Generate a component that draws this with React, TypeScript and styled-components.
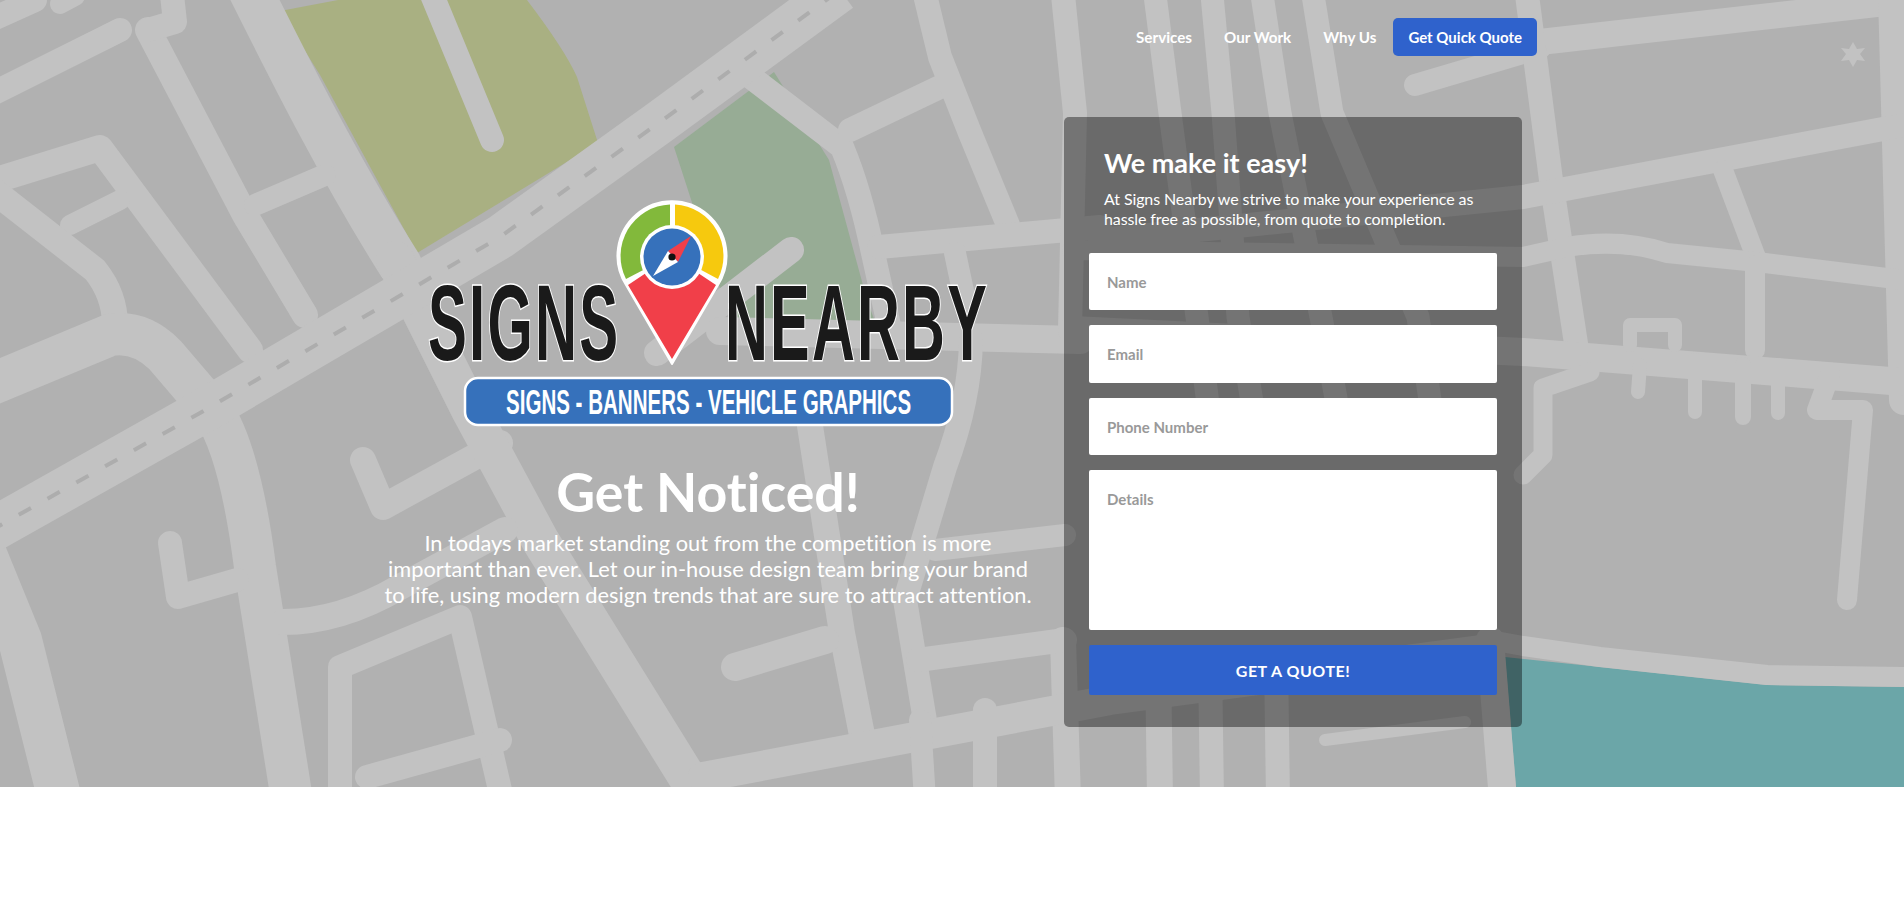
import React from "react";
import styled, { createGlobalStyle } from "styled-components";

const GlobalStyle = createGlobalStyle`
  * {
    box-sizing: border-box;
  }

  html,
  body {
    margin: 0;
    padding: 0;
    background-color: #fff;
    font-family: Lato, "Open Sans", sans-serif;
    font-variant-ligatures: none;
  }
`;

// [path, stroke width]
const roads: [string, number][] = [
  ["M-10 95 L120 30", 24],
  ["M-5 18 L35 0", 24],
  ["M60 4 L75 -4", 20],
  ["M148 30 L245 215 L305 315", 26],
  ["M148 30 L175 22 L172 -5", 24],
  ["M250 -10 C290 70 340 170 400 265", 44],
  ["M255 205 L325 175", 22],
  ["M-10 182 L100 148 L250 350", 26],
  ["M70 225 L120 200", 20],
  ["M-10 188 L95 270 Q115 295 115 325", 26],
  ["M-10 385 L110 335 Q140 330 165 355 L212 410 Q240 450 255 567 L292 800", 42],
  ["M-25 530 L20 640 L60 800", 44],
  ["M170 543 L178 597 L237 580", 24],
  ["M363 460 L383 507 L500 443", 26],
  ["M395 260 L470 410 L540 540 L695 790", 38],
  ["M283 622 Q340 622 400 587 L505 530", 26],
  ["M340 800 L340 667 L460 617 L500 790", 24],
  ["M367 777 L500 740", 24],
  ["M430 -10 L492 140", 24],
  ["M735 65 L842 147 Q860 190 873 253 L890 330", 24],
  ["M850 130 L940 87", 24],
  ["M925 -5 L940 57 L970 133 L1008 225", 24],
  ["M879 247 L1100 227", 24],
  ["M1063 -5 L1075 113 L1070 330", 24],
  ["M1155 -5 L1170 113 L1197 317 L1210 420", 23],
  ["M1212 -5 L1223 113 L1238 317 L1255 420", 23],
  ["M1262 -5 L1280 113 L1321 317 L1340 420", 23],
  ["M1313 -5 L1332 113 L1418 317 L1430 400", 23],
  ["M1063 640 L1068 800", 26],
  ["M1158 660 L1160 800", 26],
  ["M1210 660 L1212 800", 24],
  ["M1276 660 L1278 800", 24],
  ["M1325 740 L1465 722", 12],
  ["M955 253 L967 310", 22],
  ["M791 250 L657 353", 26],
  ["M720 331 L1080 340", 28],
  ["M971 340 Q970 400 945 467 L905 600 L927 733", 24],
  ["M806 400 L842 633 L862 735", 26],
  ["M735 667 L825 640", 28],
  ["M918 660 L1065 640", 24],
  ["M935 550 L1065 535", 22],
  ["M703 777 L1110 700 L1480 650", 30],
  ["M985 710 L985 800", 24],
  ["M920 720 L925 800", 22],
  ["M1415 85 L1540 48", 22],
  ["M1540 42 L1885 3", 26],
  ["M1527 -5 L1551 180 L1577 350", 24],
  ["M1893 -5 L1904 400", 30],
  ["M1100 240 L1523 197 L1904 125", 24],
  ["M1723 170 L1757 260", 20],
  ["M1072 250 L1523 257 L1567 247 Q1620 238 1667 253 L1757 262 L1904 280", 20],
  ["M1755 265 L1755 350", 20],
  ["M1072 330 L1523 352 L1904 382", 28],
  ["M1630 345 L1630 325 L1675 325 L1675 345", 14],
  ["M1640 365 L1638 392", 14],
  ["M1695 360 L1695 412", 14],
  ["M1743 365 L1743 417", 16],
  ["M1778 365 L1778 413", 14],
  ["M1590 372 L1543 388 L1543 455 L1523 475", 19],
  ["M1830 375 L1817 410 L1863 410 L1847 600", 20],
  ["M1490 640 L1523 646 L1600 657 L1767 675 L1904 677", 20],
  ["M1490 640 L1503 800", 28],
];

const MapArt = () => (
  <MapSvg viewBox="0 0 1904 787" preserveAspectRatio="none">
    <rect width="1904" height="787" fill="#b1b1b1" />
    <path d="M280 11 L338 0 L527 0 Q565 50 577 77 L598 143 L417 253 L320 75 Z" fill="#a9b082" />
    <path d="M674 147 L774 72 L829 160 L867 300 L880 335 L735 335 Z" fill="#97ac95" />
    <path d="M1505 657 L1600 667 L1767 685 L1904 687 L1904 787 L1516 787 Z" fill="#6ba6a8" />
    {roads.map(([d, width]) => (
      <path
        key={d}
        d={d}
        fill="none"
        stroke="#c2c2c2"
        strokeWidth={width}
        strokeLinecap="round"
        strokeLinejoin="round"
      />
    ))}
    <path
      d="M-10 531 L200 413 L500 237 L660 122 L840 -10"
      fill="none"
      stroke="#c2c2c2"
      strokeWidth="44"
    />
    <path
      d="M-10 531 L200 413 L500 237 L660 122 L840 -10"
      fill="none"
      stroke="#adadad"
      strokeWidth="4"
      strokeDasharray="14 19"
    />
    <path
      d="M1853 42 L1857 49 L1865 48 L1860 54 L1865 61 L1857 60 L1853 67 L1849 60 L1841 61 L1846 54 L1841 48 L1849 49 Z"
      fill="#c2c2c2"
    />
  </MapSvg>
);

const Logo = () => (
  <LogoSvg viewBox="0 0 575 235" aria-label="Signs Nearby">
    <LogoWord transform="translate(7 165) scale(0.54 1)">SIGNS</LogoWord>
    <LogoWord transform="translate(304 165) scale(0.55 1)">NEARBY</LogoWord>

    <path
      d="M251 169 L205 90 A54.5 54.5 0 1 1 297 90 Z"
      fill="#fff"
      stroke="#fff"
      strokeWidth="2"
      strokeLinejoin="round"
    />
    <path d="M249 9.5 A51.5 51.5 0 0 0 205 84 L249 61 Z" fill="#82b93b" />
    <path d="M254 9.5 A51.5 51.5 0 0 1 297 84 L254 61 Z" fill="#f6c90e" />
    <path d="M251 164 L207 90 L225 78 Q251 100 277 78 L295 90 Z" fill="#f13f49" />
    <circle cx="251" cy="62" r="32" fill="#fff" />
    <circle cx="251" cy="62" r="28.5" fill="#3671bb" />
    <path d="M270 41 L247 56 L257 67 Z" fill="#f13f49" />
    <path d="M232 81 L247 56 L257 67 Z" fill="#fff" />
    <circle cx="251" cy="62" r="3.6" fill="#111" />

    <rect x="44" y="183" width="487" height="47" rx="13" fill="#3671bb" stroke="#fff" strokeWidth="2.5" />
    <BannerText transform="translate(85 219) scale(0.587 1)">
      SIGNS - BANNERS - VEHICLE GRAPHICS
    </BannerText>
  </LogoSvg>
);

const App = () => {
  return (
    <>
      <GlobalStyle />
      <Hero>
        <MapArt />
        <Nav>
          <NavLink>Services</NavLink>
          <NavLink>Our Work</NavLink>
          <NavLink>Why Us</NavLink>
          <QuoteLink>Get Quick Quote</QuoteLink>
        </Nav>
        <Content>
          <Pitch>
            <Logo />
            <Headline>Get Noticed!</Headline>
            <PitchText>
              In todays market standing out from the competition is more important than ever. Let
              our in-house design team bring your brand to life, using modern design trends that
              are sure to attract attention.
            </PitchText>
          </Pitch>
          <FormCard>
            <CardHeader>
              <CardTitle>We make it easy!</CardTitle>
              <CardText>
                At Signs Nearby we strive to make your experience as hassle free as possible, from
                quote to completion.
              </CardText>
            </CardHeader>
            <Field type="text" placeholder="Name" />
            <Field type="email" placeholder="Email" />
            <Field type="tel" placeholder="Phone Number" />
            <DetailsField placeholder="Details" />
            <SubmitBtn type="button">GET A QUOTE!</SubmitBtn>
          </FormCard>
        </Content>
      </Hero>
    </>
  );
};

export default App;

const Hero = styled.section`
  position: relative;
  height: 787px;
  padding-top: 18px;
  overflow: hidden;
`;

const MapSvg = styled.svg`
  position: absolute;
  top: 0;
  left: 0;
  width: 100%;
  height: 100%;
`;

const Nav = styled.nav`
  position: relative;
  display: flex;
  justify-content: flex-end;
  align-items: center;
  gap: 32px;
  height: 38px;
  padding-right: 367px;
`;

const NavLink = styled.a`
  font-size: 15.2px;
  font-weight: 700;
  color: #fff;

  &:nth-child(3) {
    margin-right: -15px;
  }
`;

const QuoteLink = styled.a`
  display: flex;
  align-items: center;
  height: 38px;
  border-radius: 5px;
  padding: 0 15px;
  font-size: 15px;
  font-weight: 700;
  color: #fff;
  background-color: #2f62cc;
`;

const Content = styled.div`
  position: relative;
  display: grid;
  grid-template-columns: 680px 458px;
  column-gap: 16px;
  align-items: start;
  margin-top: 61px;
  padding-left: 368px;
`;

const Pitch = styled.div`
  display: flex;
  flex-direction: column;
  align-items: center;
  padding-top: 78px;
`;

const LogoSvg = styled.svg`
  display: block;
  width: 575px;
  height: 235px;
`;

const LogoWord = styled.text`
  font-family: "Liberation Sans", Arial, sans-serif;
  font-size: 108px;
  font-weight: 700;
  letter-spacing: 4px;
  fill: #1a1a1a;
  stroke: #fff;
  stroke-width: 3px;
  paint-order: stroke;
`;

const BannerText = styled.text`
  font-family: "Liberation Sans", Arial, sans-serif;
  font-size: 35px;
  font-weight: 700;
  fill: #fff;
`;

const Headline = styled.h1`
  margin: 31px 0 0;
  font-size: 53.6px;
  font-weight: 700;
  line-height: 60px;
  color: #fff;
`;

const PitchText = styled.p`
  width: 660px;
  margin: 9px 0 0;
  font-size: 21.8px;
  font-weight: 400;
  line-height: 26px;
  text-align: center;
  color: #fff;
`;

const FormCard = styled.form`
  display: flex;
  flex-direction: column;
  gap: 15px;
  width: 458px;
  height: 610px;
  border-radius: 5px;
  padding: 29px 25px 32px;
  background-color: rgba(0, 0, 0, 0.4);
`;

const CardHeader = styled.div`
  margin-bottom: 9px;
  padding-left: 15px;
`;

const CardTitle = styled.h2`
  margin: 0;
  font-size: 27px;
  font-weight: 700;
  line-height: 34px;
  color: #fff;
`;

const CardText = styled.p`
  margin: 9px 0 0;
  font-size: 16px;
  letter-spacing: -0.1px;
  line-height: 20px;
  color: #fff;
`;

const Field = styled.input`
  display: block;
  width: 100%;
  height: 57.5px;
  border: 0;
  border-radius: 2px;
  padding: 0 18px;
  font-family: Lato, sans-serif;
  font-size: 15px;
  font-weight: 700;
  background-color: #fff;

  &::placeholder {
    color: #999;
    opacity: 1;
  }
`;

const DetailsField = styled.textarea`
  display: block;
  width: 100%;
  height: 160px;
  border: 0;
  border-radius: 2px;
  padding: 20px 18px;
  font-family: Lato, sans-serif;
  font-size: 15px;
  font-weight: 700;
  line-height: 18px;
  resize: none;
  background-color: #fff;

  &::placeholder {
    color: #999;
    opacity: 1;
  }
`;

const SubmitBtn = styled.button`
  height: 50px;
  border: 0;
  border-radius: 2px;
  font-family: Lato, sans-serif;
  font-size: 16px;
  font-weight: 700;
  letter-spacing: 0.5px;
  color: #fff;
  background-color: #2f62cc;
`;
